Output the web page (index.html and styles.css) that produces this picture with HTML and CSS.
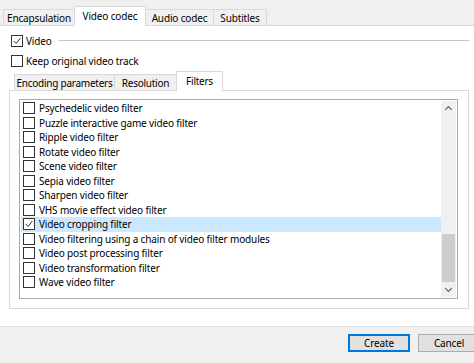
FILE: index.html
```html
<!doctype html>
<html lang="en">
  <head>
    <meta charset="UTF-8" />
    <title>Convert - Video codec</title>
    <link rel="stylesheet" href="styles.css">
  </head>
  <body>
    <div class="dialog">
      <div class="tabs">
        <div class="tab" style="width: 72px">Encapsulation</div>
        <div class="tab active" style="width: 72px">Video codec</div>
        <div class="tab" style="width: 69px">Audio codec</div>
        <div class="tab" style="width: 54px">Subtitles</div>
      </div>

      <div class="pane">
        <div class="group-head">
          <span class="box checked"><svg viewBox="0 0 12 12"><path d="M2 6 L5 9 L10 2.5" /></svg></span>
          <span class="label">Video</span>
          <span class="rule"></span>
        </div>

        <div class="option">
          <span class="box"></span>
          <span class="label">Keep original video track</span>
        </div>

        <div class="tabs inner">
          <div class="tab" style="width: 101px">Encoding parameters</div>
          <div class="tab" style="width: 63px">Resolution</div>
          <div class="tab active" style="width: 47px">Filters</div>
        </div>

        <div class="inner-pane">
          <div class="list">
            <div class="rows">
              <div class="row"><span class="box"></span>Psychedelic video filter</div>
              <div class="row"><span class="box"></span>Puzzle interactive game video filter</div>
              <div class="row"><span class="box"></span>Ripple video filter</div>
              <div class="row"><span class="box"></span>Rotate video filter</div>
              <div class="row"><span class="box"></span>Scene video filter</div>
              <div class="row"><span class="box"></span>Sepia video filter</div>
              <div class="row"><span class="box"></span>Sharpen video filter</div>
              <div class="row"><span class="box"></span>VHS movie effect video filter</div>
              <div class="row selected"><span class="box checked"><svg viewBox="0 0 12 12"><path d="M2 6 L5 9 L10 2.5" /></svg></span>Video cropping filter</div>
              <div class="row"><span class="box"></span>Video filtering using a chain of video filter modules</div>
              <div class="row"><span class="box"></span>Video post processing filter</div>
              <div class="row"><span class="box"></span>Video transformation filter</div>
              <div class="row"><span class="box"></span>Wave video filter</div>
            </div>
            <div class="scrollbar">
              <div class="arrow"><svg viewBox="0 0 16 16"><path d="M4.5 9.5 L8 6 L11.5 9.5" /></svg></div>
              <div class="track"><div class="thumb"></div></div>
              <div class="arrow"><svg viewBox="0 0 16 16"><path d="M4.5 6.5 L8 10 L11.5 6.5" /></svg></div>
            </div>
          </div>
        </div>
      </div>

      <div class="footer">
        <button class="btn default">Create</button>
        <button class="btn">Cancel</button>
      </div>
    </div>
  </body>
</html>
```

FILE: styles.css
```css
* {
  margin: 0;
  padding: 0;
  box-sizing: border-box;
}

body {
  font-family: "Noto Sans", "Open Sans", sans-serif;
  font-size: 10px;
  letter-spacing: -0.15px;
  color: #000;
  background: #f0f0f0;
  width: 474px;
  height: 363px;
  overflow: hidden;
}

.dialog {
  display: flex;
  flex-direction: column;
  height: 363px;
}

/* tab bars */
.tabs {
  display: flex;
  align-items: flex-end;
  height: 26px;
  padding: 0 0 0 3px;
  position: relative;
  z-index: 1;
  margin-bottom: -1px;
}

.tab {
  height: 16px;
  display: flex;
  align-items: center;
  justify-content: center;
  background: #f0f0f0;
  border: 1px solid #d9d9d9;
  border-bottom: none;
  margin-right: -1px;
  white-space: nowrap;
  margin-bottom: 1px;
}

.tab.active {
  height: 20px;
  background: #fff;
  margin-bottom: 0;
  padding-bottom: 1px;
  position: relative;
  z-index: 2;
}

.pane {
  background: #fff;
  border-top: 1px solid #d9d9d9;
  border-bottom: 1px solid #dcdcdc;
  height: 302px;
  padding: 8px 5px 0 9px;
}

.box {
  width: 12px;
  height: 12px;
  border: 1px solid #333;
  background: #fff;
  flex: none;
  display: inline-flex;
}

.box svg {
  width: 10px;
  height: 10px;
  fill: none;
  stroke: #333;
  stroke-width: 1.2;
}

.group-head,
.option {
  display: flex;
  align-items: center;
  height: 13px;
  padding-left: 2px;
  gap: 3px;
}

.group-head .rule {
  flex: 1;
  height: 1px;
  background: #c6c6c6;
  margin: 0 0 0 4px;
}

.option {
  margin-top: 7px;
}

.tabs.inner {
  height: 20px;
  margin-top: 4px;
  padding-left: 5px;
}

.tabs.inner .tab {
  letter-spacing: -0.25px;
}

.inner-pane {
  border: 1px solid #d9d9d9;
  background: #fff;
  height: 219px;
  padding: 8px 10px 9px 9px;
}

.list {
  display: flex;
  height: 200px;
  border: 1px solid #a9a9a9;
  padding: 1px;
}

.rows {
  flex: 1;
  overflow: hidden;
}

.row {
  height: 14.5px;
  display: flex;
  align-items: center;
  padding-left: 2px;
  gap: 4px;
  white-space: nowrap;
}

.row.selected {
  background: #cce8ff;
}

.scrollbar {
  width: 15px;
  display: flex;
  flex-direction: column;
  background: #f0f0f0;
}

.arrow {
  height: 15px;
  display: flex;
  align-items: center;
  justify-content: center;
}

.arrow svg {
  width: 15px;
  height: 15px;
  fill: none;
  stroke: #606060;
  stroke-width: 1.3;
}

.track {
  flex: 1;
  display: flex;
  flex-direction: column;
  justify-content: flex-end;
  padding: 0 1px;
}

.thumb {
  height: 48px;
  background: #cdcdcd;
}

.footer {
  flex: 1;
  display: flex;
  justify-content: flex-end;
  gap: 8px;
  padding-top: 7px;
  margin-right: -6px;
}

.btn {
  width: 62px;
  height: 18px;
  font-family: inherit;
  font-size: 10px;
  letter-spacing: inherit;
  background: #e1e1e1;
  border: 1px solid #adadad;
  color: #000;
}

.btn.default {
  border: 2px solid #0078d7;
}
```
